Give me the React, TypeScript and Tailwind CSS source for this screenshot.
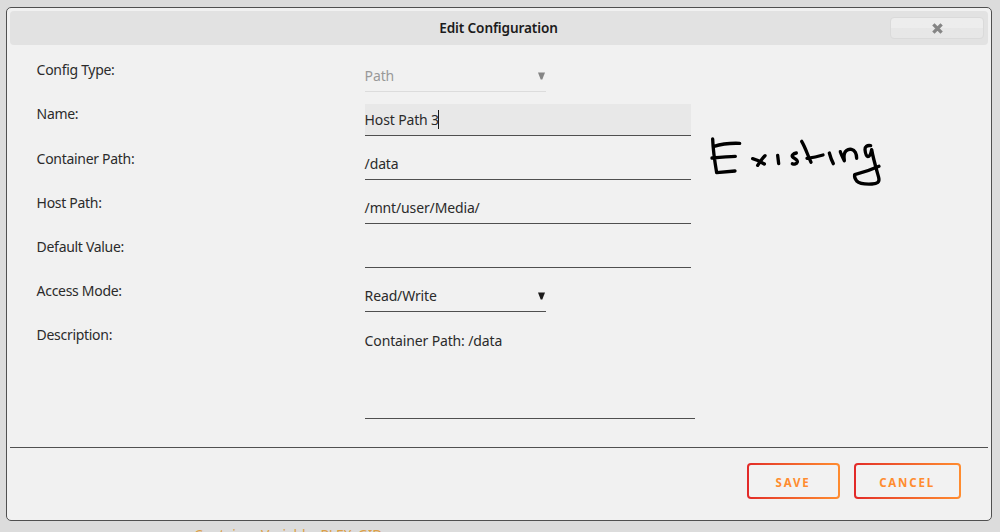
import { clsx } from 'clsx'

const fields = [
  { label: 'Config Type:', value: 'Path', type: 'select', disabled: true },
  { label: 'Name:', value: 'Host Path 3', type: 'text', focused: true },
  { label: 'Container Path:', value: '/data', type: 'text' },
  { label: 'Host Path:', value: '/mnt/user/Media/', type: 'text' },
  { label: 'Default Value:', value: '', type: 'text' },
  { label: 'Access Mode:', value: 'Read/Write', type: 'select' },
]

function Field({ field }: { field: any }) {
  return (
    <div className="flex h-[44.1px]">
      <div className="w-[328px] pt-[12.4px] leading-5 tracking-[-0.3px]">{field.label}</div>
      <div
        className={clsx(
          'mt-[12px] flex h-8 items-center justify-between border-b',
          field.type === 'select' ? 'w-[181px]' : 'w-[326px]',
          field.disabled ? 'border-[#dcdcdc] text-[#999]' : 'border-[#4f4f4f]',
          field.focused && 'bg-[#e8e8e8]'
        )}
      >
        <span className="flex items-center leading-5 tracking-[-0.14px]">
          {field.value}
          {field.focused && <span className="-ml-px h-[19px] w-px bg-[#1c1b1b]" />}
        </span>
        {field.type === 'select' && (
          <svg
            viewBox="0 0 7 8"
            className={clsx('mr-px h-[8px] w-[7px]', field.disabled ? 'fill-[#858585]' : 'fill-[#1c1b1b]')}
          >
            <path d="M0 0.5H7L4.3 7.5H2.7Z" />
          </svg>
        )}
      </div>
    </div>
  )
}

function ActionButton({ label, className }: { label: string; className: string }) {
  return (
    <button
      className={clsx('h-9 rounded-[4px] bg-linear-to-r from-[#e22828] to-[#ff8c2f] p-[2px]', className)}
    >
      <span className="flex h-full items-center justify-center rounded-[2px] bg-[#f2f2f2] pt-[3px] pr-px text-[11.5px] font-bold tracking-[1.8px] text-[#ff8c2f]">
        {label}
      </span>
    </button>
  )
}

// handwritten note next to the form
function Note() {
  return (
    <svg
      viewBox="0 0 600 210"
      className="absolute top-[125px] left-[700px] h-[70px] w-[200px] fill-none stroke-black"
      strokeWidth="10"
      strokeLinecap="round"
      strokeLinejoin="round"
    >
      <path d="M38 42C39 72 44 108 50 143L105 138M42 64C67 56 92 54 119 55M36 99C60 97 84 95 106 94" />
      <path d="M158 101C170 104 181 109 193 117M195 92C187 99 180 110 173 121" />
      <path d="M233 91L236 116" />
      <path d="M289 84C280 86 274 91 278 96C284 101 294 104 292 111C290 117 283 119 277 116" />
      <path d="M305 49C317 69 323 91 333 112M321 100C336 98 352 95 369 90" />
      <path d="M388 84C391 95 395 107 400 116" />
      <path d="M421 80C424 89 429 99 433 107C431 94 431 83 439 77C449 69 461 73 466 82C469 88 470 94 470 100" />
      <path d="M512 62C501 60 494 65 495 74C496 84 499 94 504 95C511 95 513 84 515 74C520 102 529 132 536 157C540 172 531 176 516 177C495 178 478 176 470 168C464 161 463 154 464 149C488 143 513 135 537 124" />
    </svg>
  )
}

export default function App() {
  return (
    <div className="relative h-[532px] w-[1000px] overflow-hidden bg-[#dcdcdc] pt-[7px] pl-[6px] font-['Noto_Sans','Open_Sans',sans-serif] text-[14px] text-[#2b2b2b]">
      <div className="flex h-[514px] w-[986px] flex-col rounded-[5px] border border-[#505050] bg-[#f1f1f1] p-[3px]">
        <div className="grid h-[34px] shrink-0 grid-cols-[1fr_auto_1fr] items-center rounded-[4px] bg-[#e2e2e2] pr-[4px]">
          <h2 className="col-start-2 pt-px pl-[3px] text-[13.6px] font-semibold tracking-[-0.12px] text-[#1c1b1b]">Edit Configuration</h2>
          <button className="flex h-[22px] w-[94px] items-center justify-center justify-self-end rounded-[4px] border border-[#dadada] bg-linear-to-b from-[#ededed] from-50% to-[#e7e7e7] to-50%">
            <svg viewBox="0 0 12 12" className="h-[11px] w-[11px] stroke-[#858585]" strokeWidth="3.6">
              <path d="M1.5 1.5L10.5 10.5M10.5 1.5L1.5 10.5" />
            </svg>
          </button>
        </div>

        <div className="mt-[3px] pl-[26.6px]">
          {fields.map(field => (
            <Field key={field.label} field={field} />
          ))}
          <div className="flex">
            <div className="w-[328px] pt-3 leading-5 tracking-[-0.3px]">Description:</div>
            <div className="mt-[12px] h-[94px] w-[330px] border-b border-[#4f4f4f] pt-[6px] leading-5 tracking-[-0.14px]">
              Container Path: /data
            </div>
          </div>
        </div>

        <div className="mt-auto flex h-[70px] justify-end gap-[14px] border-t border-[#505050] pt-[15px] pr-[27px]">
          <ActionButton label="SAVE" className="w-[93px]" />
          <ActionButton label="CANCEL" className="w-[107px]" />
        </div>
      </div>

      <p className="mt-[4px] ml-[188px] leading-5 tracking-[-0.14px] text-[#dd9f45]">Container Variable: PLEX_GID</p>
      <Note />
    </div>
  )
}
